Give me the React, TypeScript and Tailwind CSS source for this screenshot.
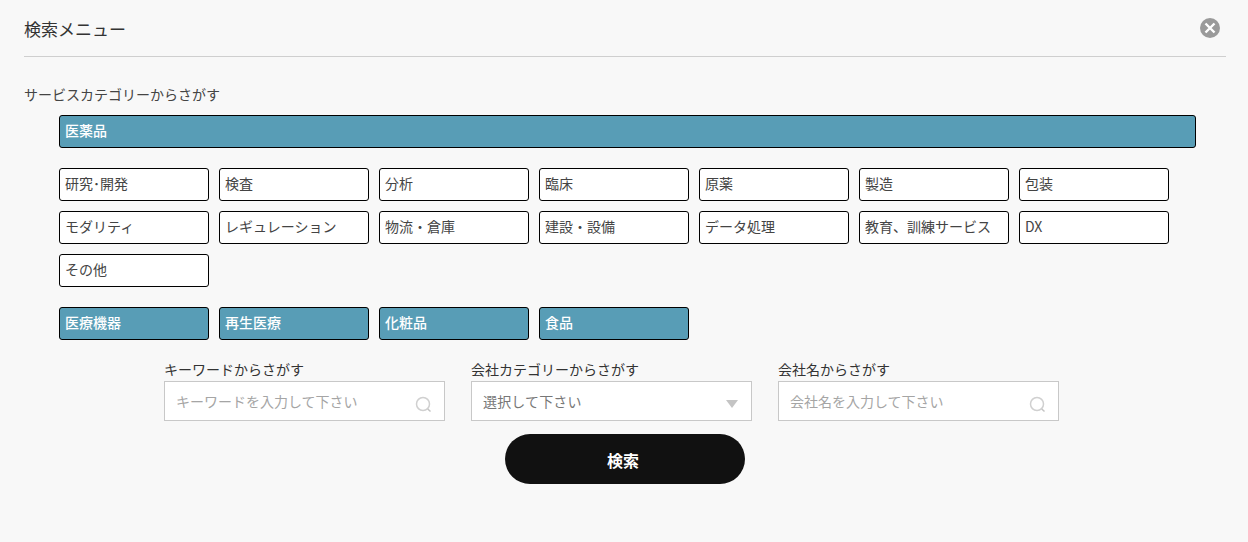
import { useState } from 'react';

const mainCategory = '医薬品';
const subCategories = [
  '研究･開発',
  '検査',
  '分析',
  '臨床',
  '原薬',
  '製造',
  '包装',
  'モダリティ',
  'レギュレーション',
  '物流・倉庫',
  '建設・設備',
  'データ処理',
  '教育、訓練サービス',
  'DX',
  'その他',
];
const otherCategories = ['医療機器', '再生医療', '化粧品', '食品'];

function SearchIcon() {
  return (
    <svg width="18" height="18" viewBox="0 0 18 18" fill="none" className="absolute right-[12px] top-[15px]">
      <circle cx="8" cy="8" r="6.5" stroke="#d0d0d0" strokeWidth="1.5" />
      <path d="M12.8 13 L15.5 15.5" stroke="#c4c4c4" strokeWidth="1.5" />
    </svg>
  );
}

function KeywordField({ label, placeholder }: { label: string; placeholder: string }) {
  const [value, setValue] = useState('');
  return (
    <div className="w-[281px]">
      <p className="pb-[2px] text-[14px] leading-[19px] text-[#333]">{label}</p>
      <div className="relative">
        <input
          value={value}
          onChange={(e) => setValue(e.target.value)}
          placeholder={placeholder}
          className="block h-[40px] w-full border border-[#c8c8c8] bg-white px-[11px] text-[14px] outline-none placeholder:text-[#a5a5a5]"
        />
        <SearchIcon />
      </div>
    </div>
  );
}

export default function App() {
  return (
    <div className="h-[542px] bg-[#f8f8f8] pl-[24px] pr-[22px] font-['Noto_Sans_CJK_JP','Noto_Sans',sans-serif] text-[#333]">
      <div className="flex h-[57px] items-center justify-between border-b border-[#cfcfcf]">
        <h2 className="pt-[2px] text-[17px] font-normal leading-[24px]">検索メニュー</h2>
        <button type="button" aria-label="閉じる" className="mr-[6px]">
          <svg width="20" height="20" viewBox="0 0 20 20" className="block">
            <circle cx="10" cy="10" r="10" fill="#9a9a9a" />
            <path d="M5.5 5.5 L14.5 14.5 M14.5 5.5 L5.5 14.5" stroke="#fff" strokeWidth="2.4" />
          </svg>
        </button>
      </div>

      <p className="mt-[27px] text-[14px] leading-[20px] text-[#444]">サービスカテゴリーからさがす</p>

      <div className="ml-[35px] mr-[8px] mt-[11px]">
        <div className="flex h-[33px] w-[1137px] items-center rounded-[3px] border border-black bg-[#589db6] px-[5px] pb-[2px] text-[14px] font-medium text-white">
          {mainCategory}
        </div>

        <div className="mt-[20px] flex flex-wrap gap-[10px]">
          {subCategories.map((c) => (
            <div
              key={c}
              className="flex h-[33px] w-[150px] items-center rounded-[3px] border border-black bg-white px-[5px] pb-[2px] text-[14px] text-[#444]"
            >
              {c}
            </div>
          ))}
        </div>

        <div className="mt-[20px] flex gap-[10px]">
          {otherCategories.map((c) => (
            <div
              key={c}
              className="flex h-[33px] w-[150px] items-center rounded-[3px] border border-black bg-[#589db6] px-[5px] pb-[2px] text-[14px] font-medium text-white"
            >
              {c}
            </div>
          ))}
        </div>
      </div>

      <div className="ml-[140px] mt-[20px] flex gap-[26px]">
        <KeywordField label="キーワードからさがす" placeholder="キーワードを入力して下さい" />
        <div className="w-[281px]">
          <p className="pb-[2px] text-[14px] leading-[19px] text-[#333]">会社カテゴリーからさがす</p>
          <div className="relative flex h-[40px] items-center border border-[#c8c8c8] bg-white px-[11px] pt-[1px] text-[14px] tracking-[0.15px] text-[#777]">
            選択して下さい
            <span className="absolute right-[13px] top-[18px] h-0 w-0 border-x-[6px] border-t-[8px] border-x-transparent border-t-[#c4c4c4]" />
          </div>
        </div>
        <KeywordField label="会社名からさがす" placeholder="会社名を入力して下さい" />
      </div>

      <button
        type="button"
        className="mx-auto mt-[13px] block h-[50px] w-[240px] rounded-full bg-[#111] pr-[4px] pt-[2px] text-[16px] font-bold text-white"
      >
        検索
      </button>
    </div>
  );
}
